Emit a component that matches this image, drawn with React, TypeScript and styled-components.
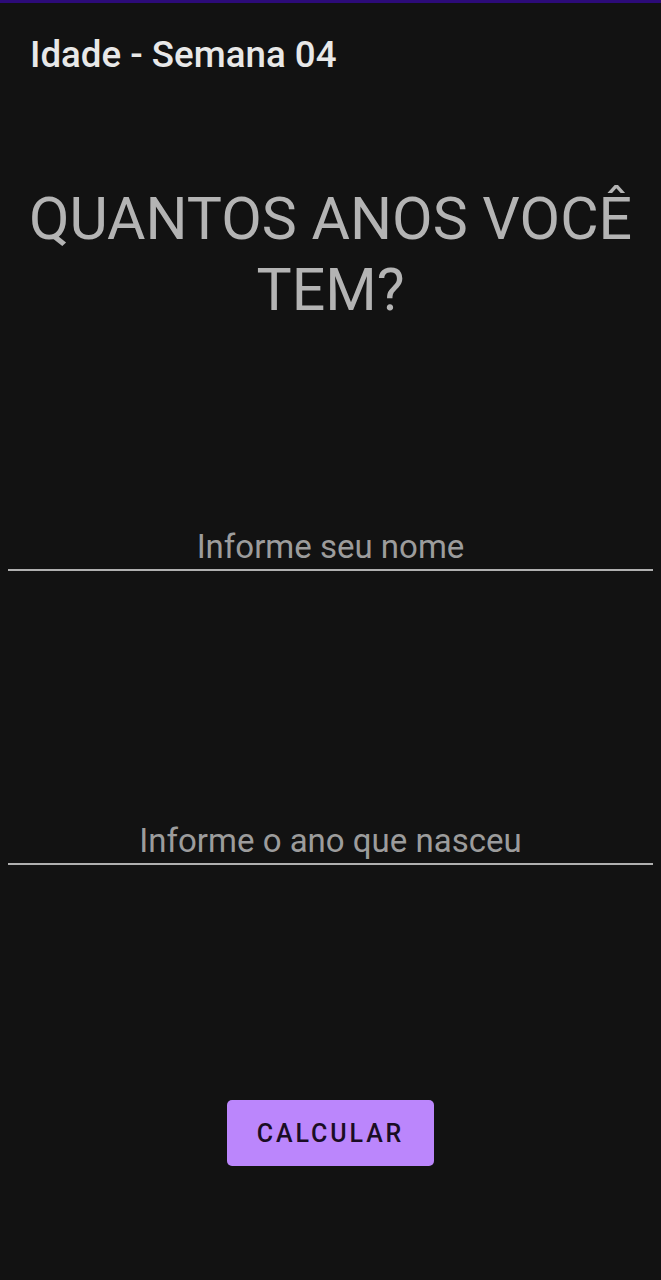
import React from "react";
import styled, { createGlobalStyle } from "styled-components";

const GlobalStyle = createGlobalStyle`
  html, body { margin: 0; padding: 0; background: #121212; }
  body { font-family: Roboto, "Noto Sans", "Liberation Sans", sans-serif; }
`;

const Screen = styled.div`
  box-sizing: border-box;
  min-height: 1280px;
  background: #121212;
  border-top: 3px solid #2c0b78;
  display: flex;
  flex-direction: column;
`;

const TopBar = styled.header`
  height: 105px;
  display: flex;
  align-items: flex-start;
  padding: 32px 0 0 30px;
  box-sizing: border-box;
`;

const Title = styled.h1`
  margin: 0;
  font-size: 36.7px;
  line-height: 40px;
  font-weight: 500;
  color: #e8e8e8;
`;

const Heading = styled.h2`
  margin: 75px 0 0;
  text-align: center;
  font-size: 59px;
  line-height: 71px;
  font-weight: 400;
  color: #b4b4b4;
`;

const Field = styled.div<{ $top: number }>`
  margin: ${(p) => p.$top}px 8px 0;
  border-bottom: 2px solid #b0b0b0;
  text-align: center;
  padding-bottom: 2px;
`;

const Placeholder = styled.span`
  font-size: 33px;
  line-height: 40px;
  color: #9c9c9c;
`;

const ButtonRow = styled.div`
  display: flex;
  justify-content: center;
  margin-top: 235px;
`;

const Button = styled.button`
  width: 207px;
  height: 66px;
  border: none;
  border-radius: 5px;
  background: #bb86fc;
  color: #1a0d24;
  font-family: Roboto, "Noto Sans", sans-serif;
  font-size: 25px;
  font-weight: 500;
  letter-spacing: 2.9px;
  padding: 0;
`;

export default function App() {
  return (
    <>
      <GlobalStyle />
      <Screen>
        <TopBar>
          <Title>Idade - Semana 04</Title>
        </TopBar>
        <Heading>
          QUANTOS ANOS VOCÊ
          <br />
          TEM?
        </Heading>
        <Field $top={202}>
          <Placeholder>Informe seu nome</Placeholder>
        </Field>
        <Field $top={250}>
          <Placeholder>Informe o ano que nasceu</Placeholder>
        </Field>
        <ButtonRow>
          <Button>CALCULAR</Button>
        </ButtonRow>
      </Screen>
    </>
  );
}
